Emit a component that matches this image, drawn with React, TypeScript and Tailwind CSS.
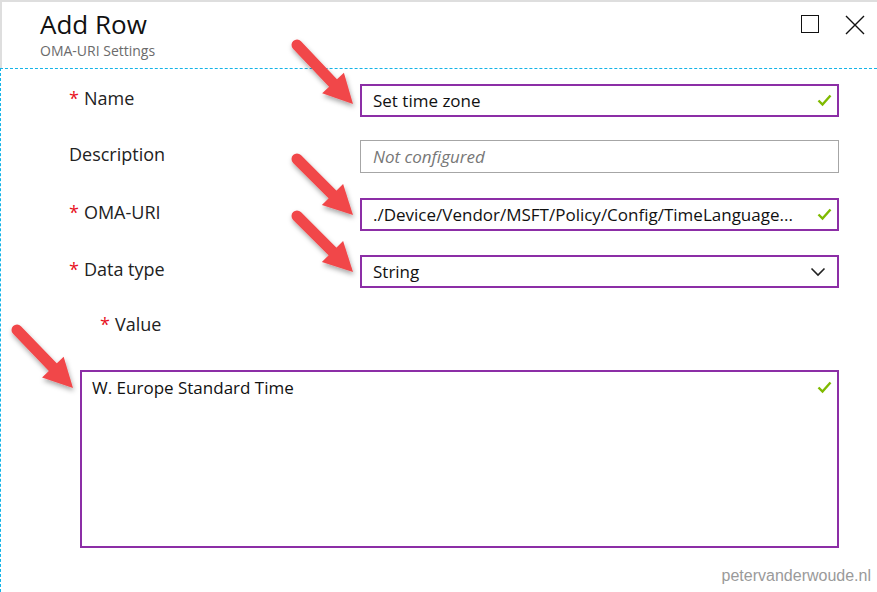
import React from "react";

const FONT = { fontFamily: '"Open Sans", "Noto Sans", sans-serif' };

// red callout arrow, tail -> tip
function Arrow({ x1, y1, x2, y2 }: { x1: number; y1: number; x2: number; y2: number }) {
  const dx = x2 - x1;
  const dy = y2 - y1;
  const len = Math.sqrt(dx * dx + dy * dy);
  const ux = dx / len;
  const uy = dy / len;
  const headLen = 29;
  const headHalf = 15;
  const bx = x2 - ux * headLen;
  const by = y2 - uy * headLen;
  const px = -uy;
  const py = ux;
  return (
    <g filter="url(#shadow)">
      <line x1={x1} y1={y1} x2={bx + ux * 2} y2={by + uy * 2} stroke="#f1474a" strokeWidth="11" strokeLinecap="round" />
      <polygon
        points={`${x2},${y2} ${bx + px * headHalf},${by + py * headHalf} ${bx - px * headHalf},${by - py * headHalf}`}
        fill="#f1474a"
      />
    </g>
  );
}

function Check() {
  return (
    <svg width="15" height="13" viewBox="0 0 15 13" className="shrink-0">
      <polyline points="1.5,6.5 5.5,10.5 13.5,1.5" fill="none" stroke="#7fba00" strokeWidth="2.4" />
    </svg>
  );
}

function Label({ text, required }: { text: string; required?: boolean }) {
  return (
    <div className="flex items-center text-[18px] text-[#222] -mt-[4px]">
      {required && <span className="text-[#e81123] mr-[5px]">*</span>}
      <span>{text}</span>
    </div>
  );
}

export default function App() {
  return (
    <div className="relative w-[877px] h-[592px] bg-white overflow-hidden" style={FONT}>
      {/* header */}
      <div className="h-[68px] border-t-2 border-l-2 border-[#dedede] flex justify-between">
        <div className="pl-[38px] pt-[4px]">
          <div className="text-[26px] leading-[36px] text-[#111]">Add Row</div>
          <div className="text-[14px] leading-[18px] text-[#6b6b6b]">OMA-URI Settings</div>
        </div>
        <div className="flex items-start gap-[26px] pt-[13px] pr-[12px]">
          <div className="w-[18px] h-[18px] border-[1.5px] border-[#111]" />
          <svg width="20" height="20" viewBox="0 0 20 20">
            <path d="M1 1 L19 19 M19 1 L1 19" stroke="#111" strokeWidth="1.4" />
          </svg>
        </div>
      </div>

      {/* body */}
      <div className="h-[524px] border-t border-l border-dashed border-[#15b4e8] pt-[15px] pl-[68px]">
        <div className="flex items-center h-[33px]">
          <div className="w-[291px]">
            <Label text="Name" required />
          </div>
          <div className="w-[479px] h-[33px] border-2 border-[#8c2ea6] flex items-center pl-[11px] pr-[5px] text-[17px] text-[#111]">
            <span className="flex-1">Set time zone</span>
            <Check />
          </div>
        </div>

        <div className="flex items-center h-[33px] mt-[23px]">
          <div className="w-[291px]">
            <Label text="Description" />
          </div>
          <div className="w-[479px] h-[33px] border border-[#a6a6a6] flex items-center pl-[12px] text-[17px] italic text-[#777]">
            Not configured
          </div>
        </div>

        <div className="flex items-center h-[33px] mt-[25px]">
          <div className="w-[291px]">
            <Label text="OMA-URI" required />
          </div>
          <div className="w-[479px] h-[33px] border-2 border-[#8c2ea6] flex items-center pl-[11px] pr-[5px] text-[17px] text-[#111]">
            <span className="flex-1 truncate pr-[10px]">./Device/Vendor/MSFT/Policy/Config/TimeLanguage...</span>
            <Check />
          </div>
        </div>

        <div className="flex items-center h-[33px] mt-[24px]">
          <div className="w-[291px]">
            <Label text="Data type" required />
          </div>
          <div className="w-[479px] h-[33px] border-2 border-[#8c2ea6] flex items-center pl-[11px] pr-[11px] text-[17px] text-[#111]">
            <span className="flex-1">String</span>
            <svg width="16" height="10" viewBox="0 0 16 10">
              <polyline points="1.5,1.5 8,8 14.5,1.5" fill="none" stroke="#222" strokeWidth="1.6" />
            </svg>
          </div>
        </div>

        <div className="flex items-center h-[33px] mt-[22px] pl-[31px]">
          <Label text="Value" required />
        </div>

        <div className="mt-[27px] ml-[11px] w-[759px] h-[178px] border-2 border-[#8c2ea6] flex items-start pl-[10px] pr-[5px] pt-[3px] text-[17px] text-[#111]">
          <span className="flex-1">W. Europe Standard Time</span>
          <div className="pt-[6px]">
            <Check />
          </div>
        </div>
      </div>

      {/* watermark */}
      <div
        className="absolute right-[6px] bottom-[4px] text-[16px] text-[#9a9a9a]"
        style={{ fontFamily: '"Liberation Sans", Arial, sans-serif' }}
      >
        petervanderwoude.nl
      </div>

      {/* callout arrows */}
      <svg className="absolute inset-0 pointer-events-none" width="877" height="592">
        <defs>
          <filter id="shadow" x="-20%" y="-20%" width="140%" height="140%">
            <feDropShadow dx="1" dy="3" stdDeviation="2.5" floodColor="#000" floodOpacity="0.35" />
          </filter>
        </defs>
        <Arrow x1={297} y1={45} x2={353} y2={104} />
        <Arrow x1={297} y1={159} x2={353} y2={215} />
        <Arrow x1={297} y1={216} x2={353} y2={272} />
        <Arrow x1={17} y1={330} x2={73} y2={388} />
      </svg>
    </div>
  );
}
